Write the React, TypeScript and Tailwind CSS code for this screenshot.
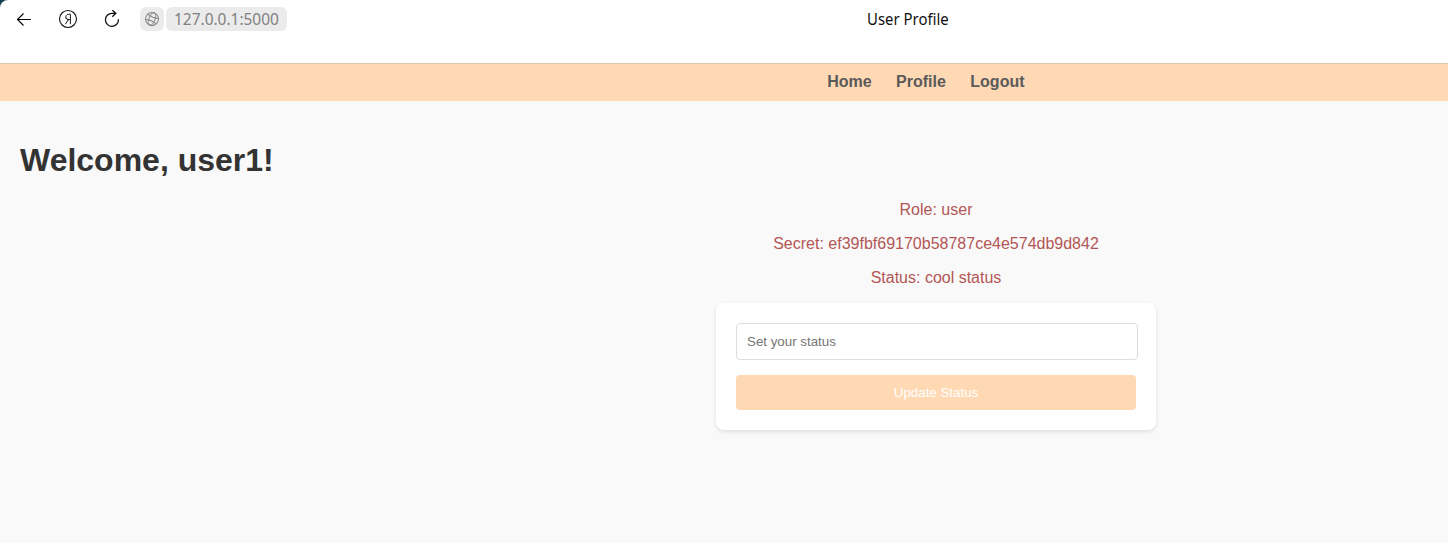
import React from "react";

const details = [
  "Role: user",
  "Secret: ef39fbf69170b58787ce4e574db9d842",
  "Status: cool status",
];

function BackIcon() {
  return (
    <svg width="16" height="16" viewBox="0 0 16 16" fill="none" stroke="#000" strokeWidth="1.1">
      <path d="M15 8.5H1.8M7.5 2.5L1.5 8.5L7.5 14.5" />
    </svg>
  );
}

function YandexIcon() {
  return (
    <svg width="20" height="20" viewBox="0 0 20 20" fill="none" stroke="#111" strokeWidth="1.1">
      <circle cx="10" cy="10" r="8.5" />
      <path d="M12.4 15.2V5.2H10.9C6.9 5.2 6.9 10.2 10 10.6M12.4 10.6H9.2M7.6 8.8L10.2 10.9L7.4 15.2" strokeWidth="0.95" />
    </svg>
  );
}

function ReloadIcon() {
  return (
    <svg width="16" height="20" viewBox="0 0 16 20" fill="none" stroke="#111" strokeWidth="1.3">
      <path d="M14.4 10.2A6.5 6.5 0 1 1 7.9 4.3H11.8M8.3 1.2L11.8 4.3L8.3 7.7" />
    </svg>
  );
}

function GlobeIcon() {
  return (
    <svg width="16" height="16" viewBox="0 0 16 16" fill="none" stroke="#858585" strokeWidth="1">
      <g transform="rotate(22 8 8)">
        <circle cx="8" cy="8" r="6.5" />
        <ellipse cx="8" cy="8" rx="3" ry="6.5" />
        <path d="M2.2 5.2Q8 7.2 13.8 5.2M2.2 10.8Q8 8.8 13.8 10.8" />
      </g>
    </svg>
  );
}

export default function App() {
  return (
    <div className="h-[543px] w-full overflow-hidden bg-[#f9f9f9] font-['Liberation_Sans',sans-serif]">
      <div className="bg-[#123e52]">
        <header className="flex h-[63px] items-start rounded-tl-[8px] bg-white font-['Noto_Sans',sans-serif]">
          <div className="flex h-[38px] w-[867px] shrink-0 items-center">
            <button className="ml-4 flex"><BackIcon /></button>
            <button className="ml-[26px] flex"><YandexIcon /></button>
            <button className="ml-[26px] flex"><ReloadIcon /></button>
            <span className="ml-5 flex h-6 w-6 items-center justify-center rounded-[6px] bg-[#ebebeb]"><GlobeIcon /></span>
            <span className="ml-[2px] flex h-6 w-[121px] items-center rounded-[6px] bg-[#ebebeb] pl-2 text-[16px] text-[#808080]">
              <span className="origin-left scale-x-[0.965] whitespace-nowrap">127.0.0.1:5000</span>
            </span>
          </div>
          <span className="flex h-[38px] origin-left scale-x-[0.933] items-center whitespace-nowrap text-[16px] text-[#111]">User Profile</span>
        </header>
      </div>
      <nav className="flex h-[38px] items-center gap-[24.45px] border-t border-[#dcc5ae] bg-[#ffd8b4] pb-[2px] pl-[827.2px] text-[16px] leading-[18px] font-bold text-[#5a5a5a]">
        <a>Home</a>
        <a>Profile</a>
        <a>Logout</a>
      </nav>
      <main className="w-[1872px] px-5 pt-[41.44px]">
        <h1 className="mb-[21.44px] text-[32px] leading-[37px] font-bold text-[#333]">Welcome, user1!</h1>
        {details.map((line) => (
          <p key={line} className="mb-4 text-center text-[16px] leading-[18px] text-[#b35656]">{line}</p>
        ))}
        <form className="mx-auto w-[440px] rounded-[8px] bg-white p-5 shadow-[0_2px_4px_rgba(0,0,0,0.1)]">
          <input
            placeholder="Set your status"
            className="mb-[15px] block h-[37px] w-[402px] rounded-[4px] border border-[#ddd] bg-white px-[10px] text-[13.333px] placeholder:text-[#757575]"
          />
          <button type="button" className="block h-[35px] w-full rounded-[4px] bg-[#ffd8b4] text-[13.333px] leading-[15px] text-white">
            Update Status
          </button>
        </form>
      </main>
    </div>
  );
}
